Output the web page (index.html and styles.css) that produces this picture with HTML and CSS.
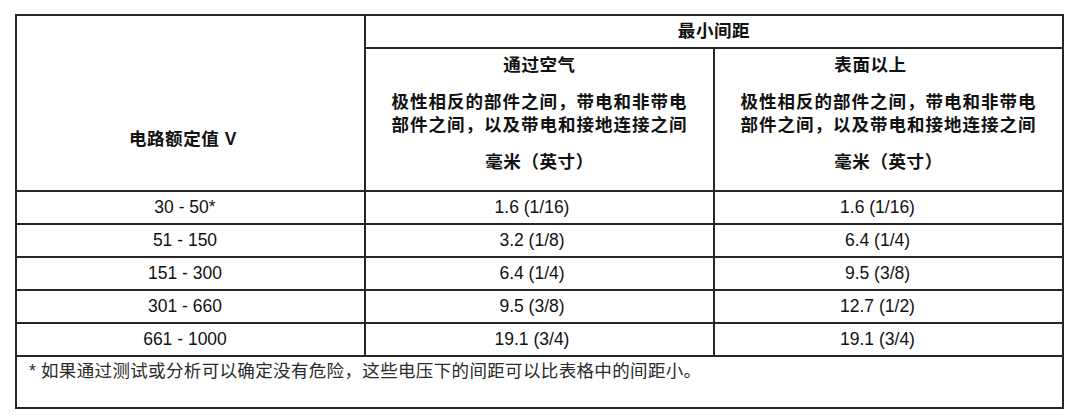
FILE: index.html
```html
<!DOCTYPE html>
<html lang="zh-CN">
<head>
<meta charset="utf-8">
<title>最小间距</title>
<link rel="stylesheet" href="styles.css">
</head>
<body>
<table class="spacing">
  <colgroup>
    <col class="col">
    <col class="col">
    <col class="col">
  </colgroup>
  <thead>
    <tr class="row-top">
      <th rowspan="2" class="h-rating">电路额定值 V</th>
      <th colspan="2" class="h-min">最小间距</th>
    </tr>
    <tr class="row-sub">
      <th class="h-sub">
        <div class="sub-title">通过空气</div>
        <div class="sub-desc">极性相反的部件之间，带电和非带电<br>部件之间，以及带电和接地连接之间</div>
        <div class="sub-unit">毫米（英寸）</div>
      </th>
      <th class="h-sub">
        <div class="sub-title shift">表面以上</div>
        <div class="sub-desc">极性相反的部件之间，带电和非带电<br>部件之间，以及带电和接地连接之间</div>
        <div class="sub-unit">毫米（英寸）</div>
      </th>
    </tr>
  </thead>
  <tbody>
    <tr class="row-data">
      <td class="c1">30 - 50*</td>
      <td class="c2">1.6 (1/16)</td>
      <td class="c3">1.6 (1/16)</td>
    </tr>
    <tr class="row-data">
      <td class="c1">51 - 150</td>
      <td class="c2">3.2 (1/8)</td>
      <td class="c3">6.4 (1/4)</td>
    </tr>
    <tr class="row-data">
      <td class="c1">151 - 300</td>
      <td class="c2">6.4 (1/4)</td>
      <td class="c3">9.5 (3/8)</td>
    </tr>
    <tr class="row-data">
      <td class="c1">301 - 660</td>
      <td class="c2">9.5 (3/8)</td>
      <td class="c3">12.7 (1/2)</td>
    </tr>
    <tr class="row-data">
      <td class="c1">661 - 1000</td>
      <td class="c2">19.1 (3/4)</td>
      <td class="c3">19.1 (3/4)</td>
    </tr>
  </tbody>
  <tfoot>
    <tr class="row-foot">
      <td colspan="3" class="foot"><span class="star">*</span> 如果通过测试或分析可以确定没有危险，这些电压下的间距可以比表格中的间距小。</td>
    </tr>
  </tfoot>
</table>
</body>
</html>
```

FILE: styles.css
```css
html, body {
  margin: 0;
  padding: 0;
  background: #ffffff;
}

body {
  padding: 14px 15px 0 15px;
  font-family: "Liberation Sans", "Noto Sans CJK SC", sans-serif;
  font-size: 17.5px;
  color: #111111;
}

.spacing {
  border-collapse: collapse;
  table-layout: fixed;
  width: 1049px;
}

.col {
  width: 349px;
}

.spacing th,
.spacing td {
  border: 2px solid #262626;
  padding: 0;
  text-align: center;
  line-height: 23.5px;
}

.spacing th {
  font-weight: 700;
}

.row-top {
  height: 33px;
}

.row-sub {
  height: 143px;
}

.row-data {
  height: 33px;
}

.row-foot {
  height: 52px;
}

.h-rating {
  vertical-align: top;
  padding-top: 112px !important;
  padding-right: 15px !important;
  letter-spacing: 0.6px;
}

.h-min {
  vertical-align: middle;
  letter-spacing: 0.6px;
}

.h-sub {
  vertical-align: top;
  padding-top: 5px !important;
}

.sub-title {
  letter-spacing: 0.6px;
}

.sub-title.shift {
  padding-right: 36px;
}

.sub-desc {
  display: inline-block;
  margin-top: 13px;
  text-align: left;
  letter-spacing: 1px;
}

.sub-unit {
  margin-top: 13px;
  letter-spacing: 0.6px;
}

.row-data td {
  vertical-align: middle;
}

.c1 {
  padding-right: 11px !important;
}

.c2 {
  padding-right: 15px !important;
}

.c3 {
  padding-right: 22px !important;
}

.foot {
  vertical-align: top;
  text-align: left !important;
  padding: 3px 0 0 12px !important;
  font-weight: 400;
  color: #2a2a2a;
  letter-spacing: 0.35px;
}

.star {
  letter-spacing: 0;
}
```
